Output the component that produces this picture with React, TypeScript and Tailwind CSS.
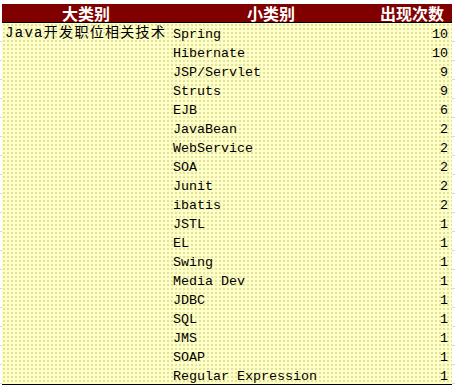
const rows: [string, number][] = [
  ['Spring', 10],
  ['Hibernate', 10],
  ['JSP/Servlet', 9],
  ['Struts', 9],
  ['EJB', 6],
  ['JavaBean', 2],
  ['WebService', 2],
  ['SOA', 2],
  ['Junit', 2],
  ['ibatis', 2],
  ['JSTL', 1],
  ['EL', 1],
  ['Swing', 1],
  ['Media Dev', 1],
  ['JDBC', 1],
  ['SQL', 1],
  ['JMS', 1],
  ['SOAP', 1],
  ['Regular Expression', 1],
];

const mono = "font-['Liberation_Mono','Noto_Sans_CJK_SC',monospace]";

export default function App() {
  return (
    <div className="w-[455px] h-[386px] bg-white overflow-hidden flex">
      {/* left gutter of the sheet */}
      <div className="w-[2px] flex flex-col pt-[23px]">
        {rows.map((_, i) => (
          <div key={i} className="h-[19px] border-b border-[#d0d7e5]" />
        ))}
      </div>

      <div className="w-[450px] flex flex-col pt-[4px]">
        <div className="grid grid-cols-[168px_202px_80px] h-[19px] bg-[#800000] border-b border-black text-white font-bold text-[16px] leading-[18px] font-['Noto_Sans_CJK_SC',sans-serif]">
          <div className="text-center">大类别</div>
          <div className="text-center">小类别</div>
          <div className="text-center">出现次数</div>
        </div>

        <div className="border-b border-black bg-[#ffffc8] bg-[radial-gradient(circle,#e2e29c_0.9px,transparent_1.1px)] bg-[size:4px_4px]">
          {rows.map(([name, count], i) => (
            <div key={name} className={`grid grid-cols-[168px_202px_80px] h-[19px] text-black ${mono}`}>
              <div className="pl-[3px] text-[14px] tracking-[1.3px] leading-[19px] pt-[1px] whitespace-nowrap">
                {i === 0 ? 'Java开发职位相关技术' : ''}
              </div>
              <div className="pl-[3px] text-[13.33px] leading-[19px] pt-[2px] whitespace-nowrap">{name}</div>
              <div className="pr-[4px] text-right text-[13.33px] leading-[19px] pt-[2px]">{count}</div>
            </div>
          ))}
        </div>
      </div>

      {/* right gutter of the sheet */}
      <div className="w-[3px] flex flex-col pt-[23px]">
        {rows.map((_, i) => (
          <div key={i} className="h-[19px] border-b border-[#d0d7e5]" />
        ))}
      </div>
    </div>
  );
}
